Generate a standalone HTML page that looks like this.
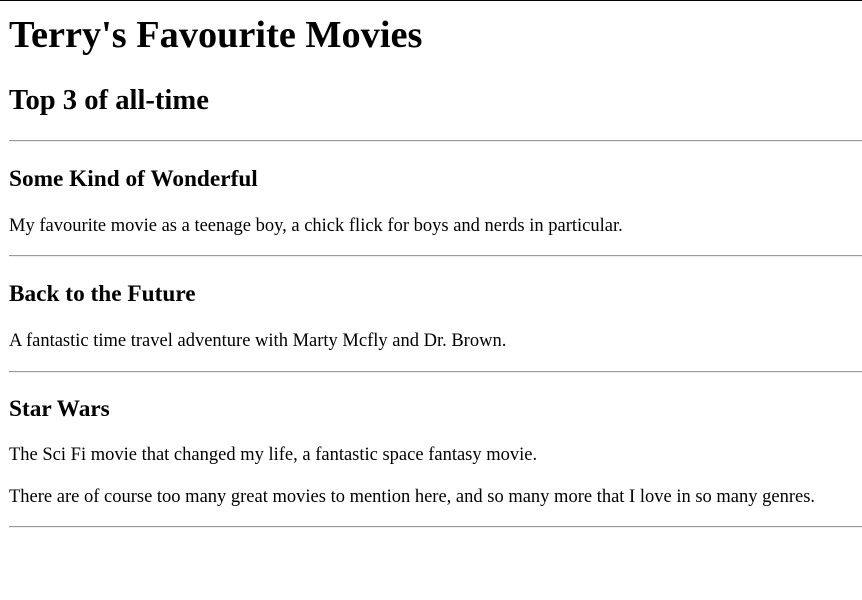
<!DOCTYPE html>
<html><head><style>
html,body{margin:0;padding:0;background:#fff;}
body{width:862px;height:600px;position:relative;overflow:hidden;border-top:1px solid #000;box-sizing:border-box;font-family:"Liberation Serif",serif;color:#000;}
.t{position:absolute;left:9px;margin:0;white-space:nowrap;}
h1.t{font-size:38.3px;line-height:38px;top:15px;font-weight:bold;}
h2.t{font-size:28.6px;line-height:28px;top:86px;font-weight:bold;}
h3.t{font-size:23.3px;line-height:23px;font-weight:bold;}
p.t{font-size:18.5px;line-height:18px;}
.hr{position:absolute;left:9px;right:0;height:0;border-top:1px solid #9a9a9a;border-bottom:1px solid #eee;}
</style></head><body>
<h1 class="t">Terry's Favourite Movies</h1>
<h2 class="t">Top 3 of all-time</h2>
<div class="hr" style="top:139px"></div>
<h3 class="t" style="top:167px">Some Kind of Wonderful</h3>
<p class="t" style="top:216px">My favourite movie as a teenage boy, a chick flick for boys and nerds in particular.</p>
<div class="hr" style="top:254px"></div>
<h3 class="t" style="top:282px">Back to the Future</h3>
<p class="t" style="top:331px">A fantastic time travel adventure with Marty Mcfly and Dr. Brown.</p>
<div class="hr" style="top:370px"></div>
<h3 class="t" style="top:397px">Star Wars</h3>
<p class="t" style="top:445px">The Sci Fi movie that changed my life, a fantastic space fantasy movie.</p>
<p class="t" style="top:487px">There are of course too many great movies to mention here, and so many more that I love in so many genres.</p>
<div class="hr" style="top:525px"></div>
</body></html>
